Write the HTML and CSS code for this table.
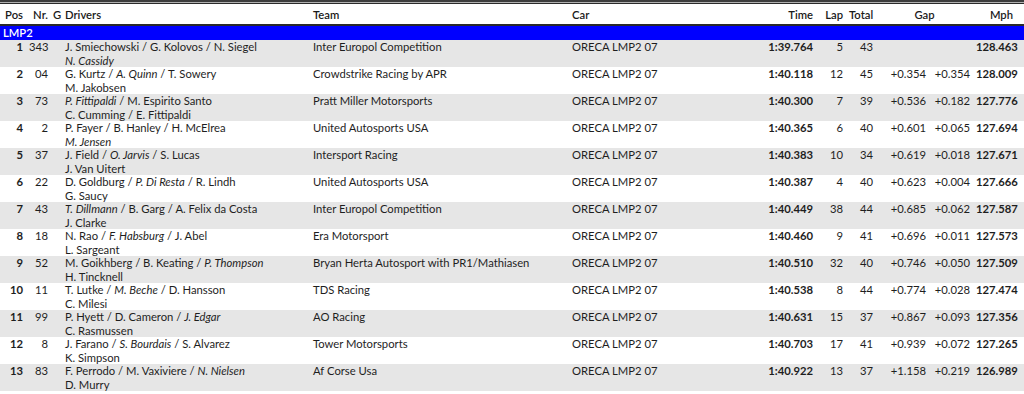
FILE: index.html
```html
<!DOCTYPE html>
<html>
<head>
<meta charset="utf-8">
<link rel="stylesheet" href="styles.css">
</head>
<body>
<div class="topbar"></div>
<table class="results">
<colgroup>
<col class="c-pos"><col class="c-nr"><col class="c-g"><col class="c-drv"><col class="c-team"><col class="c-car"><col class="c-time"><col class="c-lap"><col class="c-total"><col class="c-gap1"><col class="c-gap2"><col class="c-mph">
</colgroup>
<thead>
<tr class="head">
<th class="r">Pos</th><th class="r">Nr.</th><th class="l g">G</th><th class="l">Drivers</th><th class="l">Team</th><th class="l">Car</th><th class="r">Time</th><th class="r">Lap</th><th class="r">Total</th><th class="c" colspan="2">Gap</th><th class="r">Mph</th>
</tr>
</thead>
<tbody>
<tr class="cls"><td colspan="12">LMP2</td></tr>
<tr class="odd"><td class="pos">1</td><td class="r">343</td><td></td><td>J. Smiechowski / G. Kolovos / N. Siegel<br><i>N. Cassidy</i></td><td>Inter Europol Competition</td><td>ORECA LMP2 07</td><td class="b r">1:39.764</td><td class="r">5</td><td class="r">43</td><td class="r"></td><td class="r"></td><td class="b r">128.463</td></tr>
<tr><td class="pos">2</td><td class="r">04</td><td></td><td>G. Kurtz / <i>A. Quinn</i> / T. Sowery<br>M. Jakobsen</td><td>Crowdstrike Racing by APR</td><td>ORECA LMP2 07</td><td class="b r">1:40.118</td><td class="r">12</td><td class="r">45</td><td class="r">+0.354</td><td class="r">+0.354</td><td class="b r">128.009</td></tr>
<tr class="odd"><td class="pos">3</td><td class="r">73</td><td></td><td><i>P. Fittipaldi</i> / M. Espirito Santo<br>C. Cumming / E. Fittipaldi</td><td>Pratt Miller Motorsports</td><td>ORECA LMP2 07</td><td class="b r">1:40.300</td><td class="r">7</td><td class="r">39</td><td class="r">+0.536</td><td class="r">+0.182</td><td class="b r">127.776</td></tr>
<tr><td class="pos">4</td><td class="r">2</td><td></td><td>P. Fayer / B. Hanley / H. McElrea<br><i>M. Jensen</i></td><td>United Autosports USA</td><td>ORECA LMP2 07</td><td class="b r">1:40.365</td><td class="r">6</td><td class="r">40</td><td class="r">+0.601</td><td class="r">+0.065</td><td class="b r">127.694</td></tr>
<tr class="odd"><td class="pos">5</td><td class="r">37</td><td></td><td>J. Field / <i>O. Jarvis</i> / S. Lucas<br>J. Van Uitert</td><td>Intersport Racing</td><td>ORECA LMP2 07</td><td class="b r">1:40.383</td><td class="r">10</td><td class="r">34</td><td class="r">+0.619</td><td class="r">+0.018</td><td class="b r">127.671</td></tr>
<tr><td class="pos">6</td><td class="r">22</td><td></td><td>D. Goldburg / <i>P. Di Resta</i> / R. Lindh<br>G. Saucy</td><td>United Autosports USA</td><td>ORECA LMP2 07</td><td class="b r">1:40.387</td><td class="r">4</td><td class="r">40</td><td class="r">+0.623</td><td class="r">+0.004</td><td class="b r">127.666</td></tr>
<tr class="odd"><td class="pos">7</td><td class="r">43</td><td></td><td><i>T. Dillmann</i> / B. Garg / A. Felix da Costa<br>J. Clarke</td><td>Inter Europol Competition</td><td>ORECA LMP2 07</td><td class="b r">1:40.449</td><td class="r">38</td><td class="r">44</td><td class="r">+0.685</td><td class="r">+0.062</td><td class="b r">127.587</td></tr>
<tr><td class="pos">8</td><td class="r">18</td><td></td><td>N. Rao / <i>F. Habsburg</i> / J. Abel<br>L. Sargeant</td><td>Era Motorsport</td><td>ORECA LMP2 07</td><td class="b r">1:40.460</td><td class="r">9</td><td class="r">41</td><td class="r">+0.696</td><td class="r">+0.011</td><td class="b r">127.573</td></tr>
<tr class="odd"><td class="pos">9</td><td class="r">52</td><td></td><td>M. Goikhberg / B. Keating / <i>P. Thompson</i><br>H. Tincknell</td><td>Bryan Herta Autosport with PR1/Mathiasen</td><td>ORECA LMP2 07</td><td class="b r">1:40.510</td><td class="r">32</td><td class="r">40</td><td class="r">+0.746</td><td class="r">+0.050</td><td class="b r">127.509</td></tr>
<tr><td class="pos">10</td><td class="r">11</td><td></td><td>T. Lutke / <i>M. Beche</i> / D. Hansson<br>C. Milesi</td><td>TDS Racing</td><td>ORECA LMP2 07</td><td class="b r">1:40.538</td><td class="r">8</td><td class="r">44</td><td class="r">+0.774</td><td class="r">+0.028</td><td class="b r">127.474</td></tr>
<tr class="odd"><td class="pos">11</td><td class="r">99</td><td></td><td>P. Hyett / D. Cameron / <i>J. Edgar</i><br>C. Rasmussen</td><td>AO Racing</td><td>ORECA LMP2 07</td><td class="b r">1:40.631</td><td class="r">15</td><td class="r">37</td><td class="r">+0.867</td><td class="r">+0.093</td><td class="b r">127.356</td></tr>
<tr><td class="pos">12</td><td class="r">8</td><td></td><td>J. Farano / <i>S. Bourdais</i> / S. Alvarez<br>K. Simpson</td><td>Tower Motorsports</td><td>ORECA LMP2 07</td><td class="b r">1:40.703</td><td class="r">17</td><td class="r">41</td><td class="r">+0.939</td><td class="r">+0.072</td><td class="b r">127.265</td></tr>
<tr class="odd"><td class="pos">13</td><td class="r">83</td><td></td><td>F. Perrodo / M. Vaxiviere / <i>N. Nielsen</i><br>D. Murry</td><td>Af Corse Usa</td><td>ORECA LMP2 07</td><td class="b r">1:40.922</td><td class="r">13</td><td class="r">37</td><td class="r">+1.158</td><td class="r">+0.219</td><td class="b r">126.989</td></tr>
</tbody>
</table>
</body>
</html>
```
FILE: styles.css
```css
html, body {
  margin: 0;
  padding: 0;
  background: #fff;
}
body {
  font-family: Lato, "Noto Sans", sans-serif;
  font-size: 11.25px;
  color: #1e1e1e;
}
.topbar {
  height: 1px;
  background: #b0b0b0;
  border-top: 2px solid #3c3c3c;
  border-bottom: 1px solid #2a2a2a;
}
.results {
  width: 1024px;
  border-collapse: collapse;
  table-layout: fixed;
}
.c-pos { width: 26px; }
.c-nr { width: 25px; }
.c-g { width: 11px; }
.c-drv { width: 248px; }
.c-team { width: 259px; }
.c-car { width: 191px; }
.c-time { width: 56px; }
.c-lap { width: 30px; }
.c-total { width: 30px; }
.c-gap1 { width: 53px; }
.c-gap2 { width: 44px; }
.c-mph { width: 51px; }

.results th, .results td {
  padding: 0 3px;
  white-space: nowrap;
  overflow: hidden;
}
.head th {
  height: 19px;
  font-weight: 600;
  font-size: 11.25px;
  color: #1a1a1a;
  border-bottom: 2px solid #2a2a2a;
  vertical-align: middle;
  padding-top: 1px;
}
.head th.g { padding-left: 2px; }
.cls td {
  background: #0000ff;
  color: #fff;
  font-weight: 600;
  height: 14px;
  line-height: 14px;
  border-top: 1px solid #b0b0b0;
  padding-left: 3px;
}
.results tbody tr:not(.cls) td {
  height: 27px;
  line-height: 13.5px;
  vertical-align: top;
  padding-top: 0;
  padding-bottom: 0;
  box-sizing: border-box;
}
.results tbody tr.odd td {
  background: #e6e6e6;
}
.r { text-align: right; }
.l { text-align: left; }
.c { text-align: center; }
.b { font-weight: 700; }
.pos { text-align: right; font-weight: 700; }
.results th:last-child, .results td:last-child { padding-right: 11px; }
```
